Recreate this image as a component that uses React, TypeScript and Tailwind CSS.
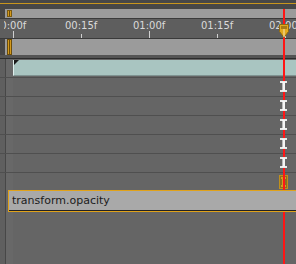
import React from 'react';

const ticks = [
  { label: '00:00f', x: 13, tall: true, shift: -3 },
  { label: '00:15f', x: 81, tall: false, shift: 0 },
  { label: '01:00f', x: 149, tall: true, shift: 0 },
  { label: '01:15f', x: 217, tall: false, shift: 0 },
  { label: '02:00f', x: 285, tall: true, shift: 0 },
];

function IBeam() {
  return (
    <svg width="7" height="11" viewBox="0 0 7 11">
      <rect x="0" y="0" width="7" height="2" fill="#e8e8e8" />
      <rect x="0" y="9" width="7" height="2" fill="#e8e8e8" />
      <rect x="2" y="1" width="3" height="9" fill="#f4f4f4" />
      <rect x="2" y="2" width="1" height="7" fill="#bdbdbd" />
    </svg>
  );
}

function KeyBox() {
  return (
    <svg width="9" height="14" viewBox="0 0 9 14">
      <rect x="0.5" y="0.5" width="8" height="13" fill="#8c6e22" stroke="#c0901c" />
      <rect x="2" y="2" width="5" height="2" fill="#d59d20" />
      <rect x="2" y="10" width="5" height="2" fill="#d59d20" />
      <rect x="3" y="3" width="3" height="8" fill="#d59d20" />
    </svg>
  );
}

function PlayheadHandle() {
  return (
    <svg width="10" height="14" viewBox="0 0 10 14">
      <path d="M0.5 0.5 H9.5 V7.5 L5 13.5 L0.5 7.5 Z" fill="#e2a91e" stroke="#8e6812" />
      <rect x="2.5" y="2" width="1" height="3" fill="#6b4d0c" />
      <rect x="4.5" y="2" width="1" height="3" fill="#6b4d0c" />
      <rect x="6.5" y="2" width="1" height="3" fill="#6b4d0c" />
      <rect x="4.5" y="5" width="1" height="8" fill="#f3e3b8" />
    </svg>
  );
}

function LeftCols({ inner = 7 }: { inner?: number }) {
  return (
    <>
      <div className="w-[5px] shrink-0 bg-[#5f5f5f]" />
      <div className="w-px shrink-0 bg-[#474747]" />
      {inner === 7 ? (
        <div className="w-[7px] shrink-0 bg-[#686868]" />
      ) : (
        <div className="w-[2px] shrink-0 bg-[#686868]" />
      )}
    </>
  );
}

function TrackRow({ children, h = 'h-[19px]', border = true }: { children?: React.ReactNode; h?: string; border?: boolean }) {
  return (
    <div className={`flex ${h} ${border ? 'border-b border-[#4f4f4f]' : ''}`}>
      <LeftCols />
      <div className="flex flex-1 justify-end pr-[9px]">{children}</div>
    </div>
  );
}

export default function App() {
  return (
    <div
      className="relative w-[296px] h-[264px] overflow-hidden bg-[#656565] flex flex-col"
      style={{ fontFamily: '"DejaVu Sans", "Liberation Sans", sans-serif' }}
    >
      {/* top strip */}
      <div className="h-[9px] shrink-0 bg-[#474747] pt-[3px]">
        <div className="h-px bg-[#c8951c]" />
      </div>

      {/* range bar */}
      <div className="h-[9px] shrink-0 flex bg-[#474747]">
        <div className="ml-[5px] flex-1 bg-[#9b9b9b] pl-[2px] pt-px">
          <div className="w-[5px] h-[7px] bg-[#d49a1c] border border-[#7a5a12] flex justify-center">
            <div className="w-px bg-[#6b4d0c]" />
          </div>
        </div>
      </div>
      <div className="h-px shrink-0 bg-[#3a3a3a]" />

      {/* ruler */}
      <div className="h-[19px] shrink-0 bg-[#5e5e5e] pl-[4px]">
        <div className="relative h-full overflow-hidden">
          {ticks.map((t) => (
            <React.Fragment key={t.label}>
              <span
                className="absolute top-px w-[32px] text-center text-[10px] leading-[12px] text-[#dadada]"
                style={{ left: t.x - 4 - 16 + t.shift }}
              >
                {t.label}
              </span>
              <div
                className={`absolute bottom-0 w-px bg-[#d0d0d0] ${t.tall ? 'h-[7px]' : 'h-[4px]'}`}
                style={{ left: t.x - 4 }}
              />
            </React.Fragment>
          ))}
        </div>
      </div>
      <div className="h-px shrink-0 bg-[#3a3a3a]" />

      {/* work area bar */}
      <div className="h-[16px] shrink-0 flex bg-[#474747]">
        <div className="ml-[5px] flex-1 bg-[#9b9b9b] pl-[2px]">
          <div className="w-[5px] h-[16px] bg-[#d49a1c] border border-[#6b4d0c] flex justify-center gap-px">
            <div className="w-px bg-[#6b4d0c]" />
          </div>
        </div>
      </div>
      <div className="h-[3px] shrink-0 bg-[#545454]" />
      <div className="h-px shrink-0 bg-[#2c2c2c]" />

      {/* layer bar row */}
      <div className="flex h-[19px] shrink-0 border-b border-[#4f4f4f]">
        <LeftCols />
        <div className="flex-1 pt-px">
          <div className="relative h-[16px] bg-[#a9c5c1] border-l border-[#dfeeec] border-b border-b-[#7f9391]">
            <div className="absolute left-0 top-0 w-0 h-0 border-t-[5px] border-r-[5px] border-t-[#1a1a1a] border-r-transparent" />
          </div>
        </div>
      </div>

      {/* property rows */}
      {[0, 1, 2, 3, 4].map((i) => (
        <TrackRow key={i}>
          <div className="relative z-20 pt-[3px]">
            <IBeam />
          </div>
        </TrackRow>
      ))}
      <TrackRow h="h-[17px]" border={false}>
        <div className="pt-[2px] mr-[-1px]">
          <KeyBox />
        </div>
      </TrackRow>

      {/* selected graph label */}
      <div className="relative z-20 flex h-[22px] shrink-0">
        <LeftCols inner={2} />
        <div className="flex-1 flex flex-col border-t border-l border-[#e0a21a] bg-[#a9a9a9]">
          <div className="flex-1 flex items-center pl-[3px] text-[11px] leading-[13px] text-[#1c1c1c]">
            transform.opacity
          </div>
          <div className="h-px bg-[#222]" />
          <div className="h-[1px] bg-[#e0a21a]" />
        </div>
      </div>

      {/* empty area */}
      <div className="flex flex-1">
        <LeftCols />
        <div className="flex-1" />
      </div>

      {/* playhead */}
      <div className="absolute top-[9px] bottom-0 left-[283px] w-[2px] bg-[#ff1515] z-10" />
      <div className="absolute top-[24px] left-[279px] z-30">
        <PlayheadHandle />
      </div>
    </div>
  );
}
